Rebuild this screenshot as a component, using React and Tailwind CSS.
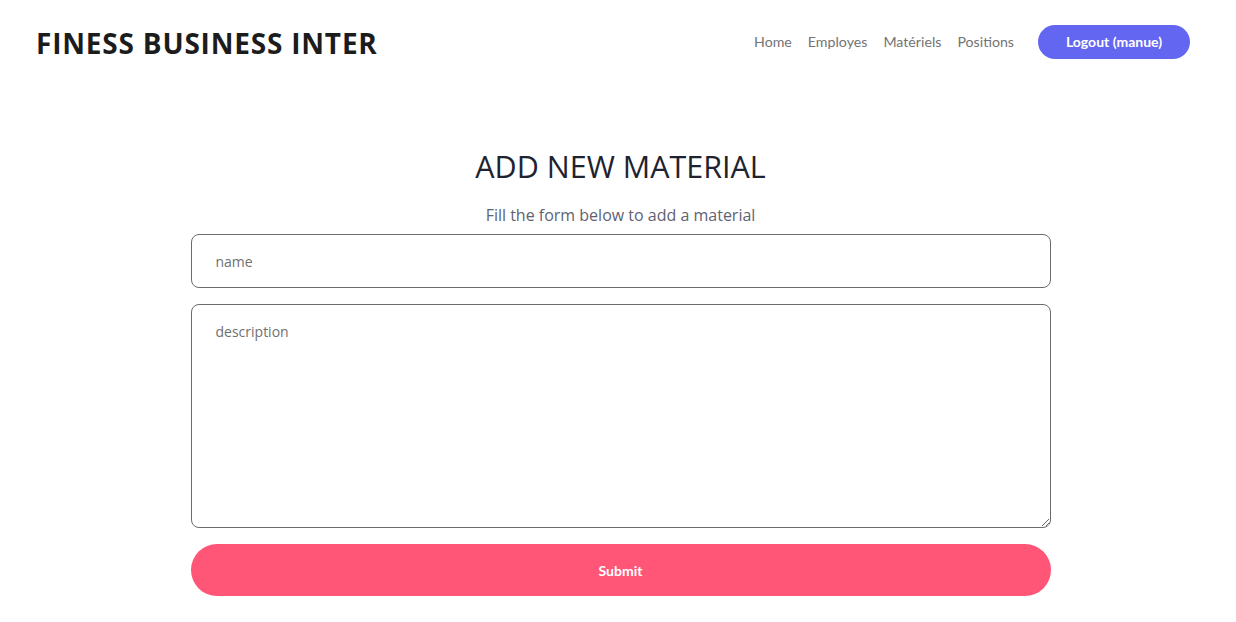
export default function App() {
  return (
    <div className="min-h-screen bg-white font-['Open_Sans',sans-serif]">
      <header className="flex items-center justify-between pl-[36px] pr-[46px] pt-[25px] h-[59px] box-content">
        <h1 className="text-[28px] font-bold text-[#1c1c1c] tracking-[0.8px] leading-none -mt-[24px]">FINESS BUSINESS INTER</h1>
        <nav className="flex items-center font-['Lato',sans-serif] text-[14.2px] text-[#737373] -mt-[26px]">
          <a className="mr-[16px]">Home</a>
          <a className="mr-[16px]">Employes</a>
          <a className="mr-[16px]">Matériels</a>
          <a className="mr-[24px]">Positions</a>
          <button className="h-[34px] w-[152px] rounded-full bg-[#6366f1] text-white font-bold text-[14px]">Logout (manue)</button>
        </nav>
      </header>

      <main className="flex flex-col items-center pt-[62px] pl-[5px]">
        <h2 className="text-[30.5px] font-normal text-[#1f2330] leading-[40px]">ADD NEW MATERIAL</h2>
        <p className="mt-[18px] text-[16px] text-[#5f6273] leading-[22px]">Fill the form below to add a material</p>
        <form className="w-[860px] flex flex-col gap-[16px] mt-[8px]">
          <input
            placeholder="name"
            className="h-[54px] w-full rounded-[8px] border border-[#6b6b6b] px-[24px] text-[14px] placeholder:text-[#707070] outline-none"
          />
          <textarea
            placeholder="description"
            className="h-[224px] w-full rounded-[8px] border border-[#6b6b6b] px-[24px] py-[16px] text-[14px] placeholder:text-[#707070] outline-none"
          />
          <button type="button" className="h-[52px] w-full rounded-full bg-[#ff5577] text-white text-[14px] font-bold font-['Lato',sans-serif]">Submit</button>
        </form>
      </main>
    </div>
  );
}
